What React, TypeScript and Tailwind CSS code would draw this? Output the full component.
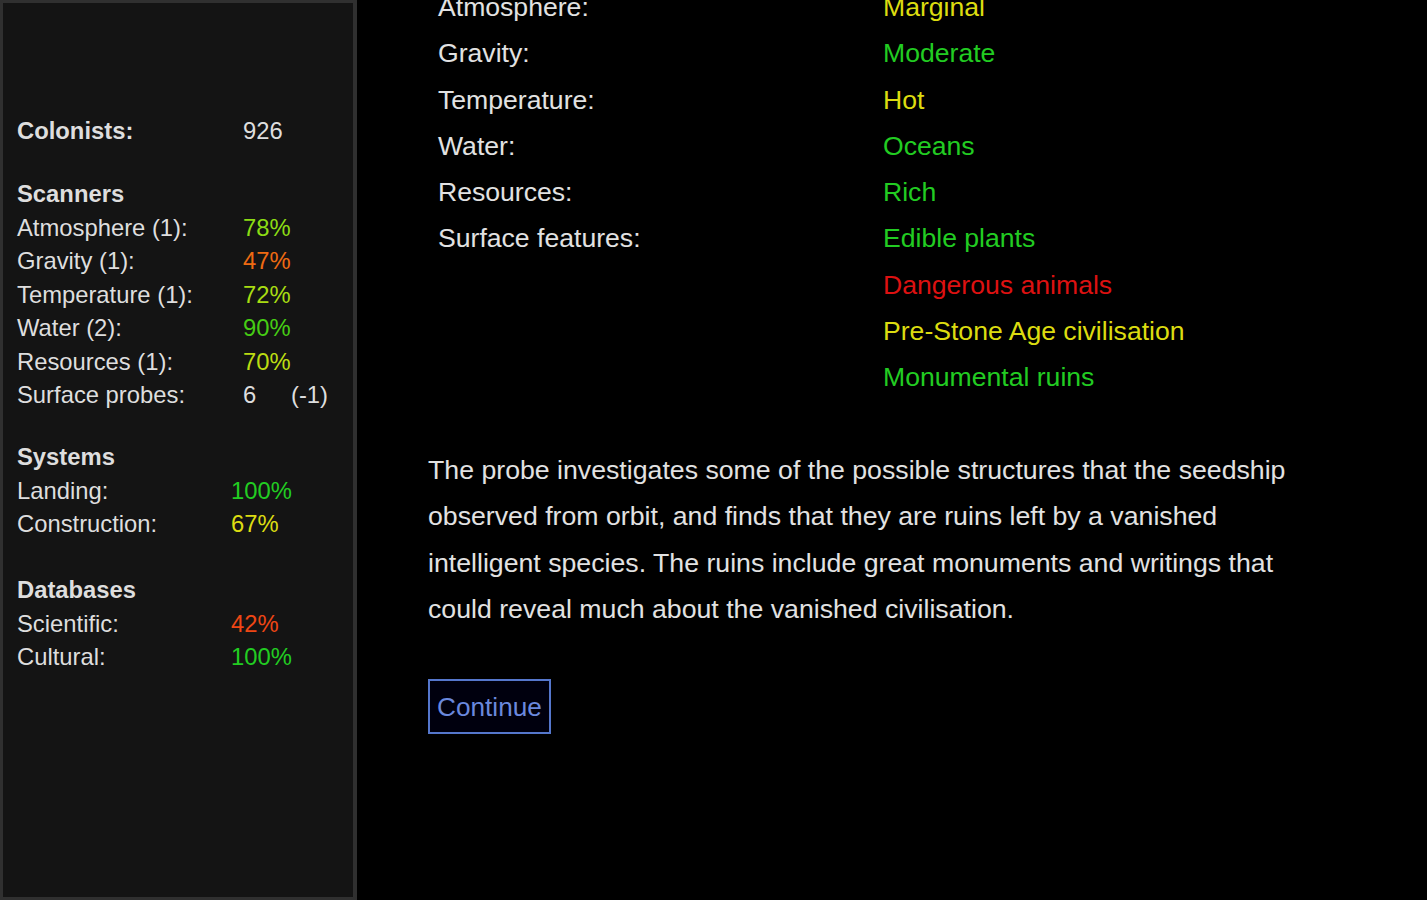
import React from "react";

type Stat = { label: string; value: string; color: string; extra?: string };

const scanners: Stat[] = [
  { label: "Atmosphere (1):", value: "78%", color: "text-[#8cdc14]" },
  { label: "Gravity (1):", value: "47%", color: "text-[#ee6a12]" },
  { label: "Temperature (1):", value: "72%", color: "text-[#a8dc12]" },
  { label: "Water (2):", value: "90%", color: "text-[#46cc14]" },
  { label: "Resources (1):", value: "70%", color: "text-[#bcdc12]" },
  { label: "Surface probes:", value: "6", color: "text-[#dddddd]", extra: "(-1)" },
];

const systems: Stat[] = [
  { label: "Landing:", value: "100%", color: "text-[#22cc22]" },
  { label: "Construction:", value: "67%", color: "text-[#dcdc12]" },
];

const databases: Stat[] = [
  { label: "Scientific:", value: "42%", color: "text-[#ee4614]" },
  { label: "Cultural:", value: "100%", color: "text-[#22cc22]" },
];

const planet: { label: string; value: string; color: string }[] = [
  { label: "Atmosphere:", value: "Marginal", color: "text-[#dcdc10]" },
  { label: "Gravity:", value: "Moderate", color: "text-[#22cc22]" },
  { label: "Temperature:", value: "Hot", color: "text-[#dcdc10]" },
  { label: "Water:", value: "Oceans", color: "text-[#22cc22]" },
  { label: "Resources:", value: "Rich", color: "text-[#22cc22]" },
  { label: "Surface features:", value: "Edible plants", color: "text-[#22cc22]" },
  { label: "", value: "Dangerous animals", color: "text-[#dd1111]" },
  { label: "", value: "Pre-Stone Age civilisation", color: "text-[#dcdc10]" },
  { label: "", value: "Monumental ruins", color: "text-[#22cc22]" },
];

function StatTable({ rows, col }: { rows: Stat[]; col: string }) {
  return (
    <div>
      {rows.map((r) => (
        <div key={r.label} className="flex">
          <div className={col}>{r.label}</div>
          <div className={`${r.color} w-[48px]`}>{r.value}</div>
          {r.extra && <div>{r.extra}</div>}
        </div>
      ))}
    </div>
  );
}

export default function App() {
  return (
    <div
      className="flex h-[900px] w-full overflow-hidden bg-black"
      style={{ fontFamily: '"Liberation Sans", Arial, sans-serif' }}
    >
      {/* Status sidebar */}
      <aside className="w-[357px] shrink-0 h-full bg-[#141414] border-[3px] border-r-4 border-[#303030] pl-[14px] pt-[111px] text-[23.8px] leading-[33.5px] text-[#dedede]">
        <div className="flex">
          <div className="w-[226px] font-bold">Colonists:</div>
          <div>926</div>
        </div>

        <div className="mt-[29.5px]">
          <div className="font-bold">Scanners</div>
          <StatTable rows={scanners} col="w-[226px]" />
        </div>

        <div className="mt-[28.5px]">
          <div className="font-bold">Systems</div>
          <StatTable rows={systems} col="w-[214px]" />
        </div>

        <div className="mt-[32.5px]">
          <div className="font-bold">Databases</div>
          <StatTable rows={databases} col="w-[214px]" />
        </div>
      </aside>

      {/* Event panel (scrolled slightly) */}
      <main className="flex-1 pl-[71px] text-[26.6px] leading-[46.3px] text-[#e2e2e2]">
        <div className="-mt-[16px] w-[882px]">
          <div className="ml-[10px]">
            {planet.map((p, i) => (
              <div key={i} className="flex">
                <div className="w-[445px] shrink-0">{p.label}</div>
                <div className={p.color}>{p.value}</div>
              </div>
            ))}
          </div>

          <p className="mt-[46.3px] text-[26.7px]">
            The probe investigates some of the possible structures that the seedship observed from orbit,
            and finds that they are ruins left by a vanished intelligent species. The ruins include great
            monuments and writings that could reveal much about the vanished civilisation.
          </p>

          <button className="mt-[47px] h-[55px] px-[7px] border-2 border-[#5577cc] bg-[#00000e] text-[#6a88dd] text-[26.2px] leading-none">
            Continue
          </button>
        </div>
      </main>
    </div>
  );
}
